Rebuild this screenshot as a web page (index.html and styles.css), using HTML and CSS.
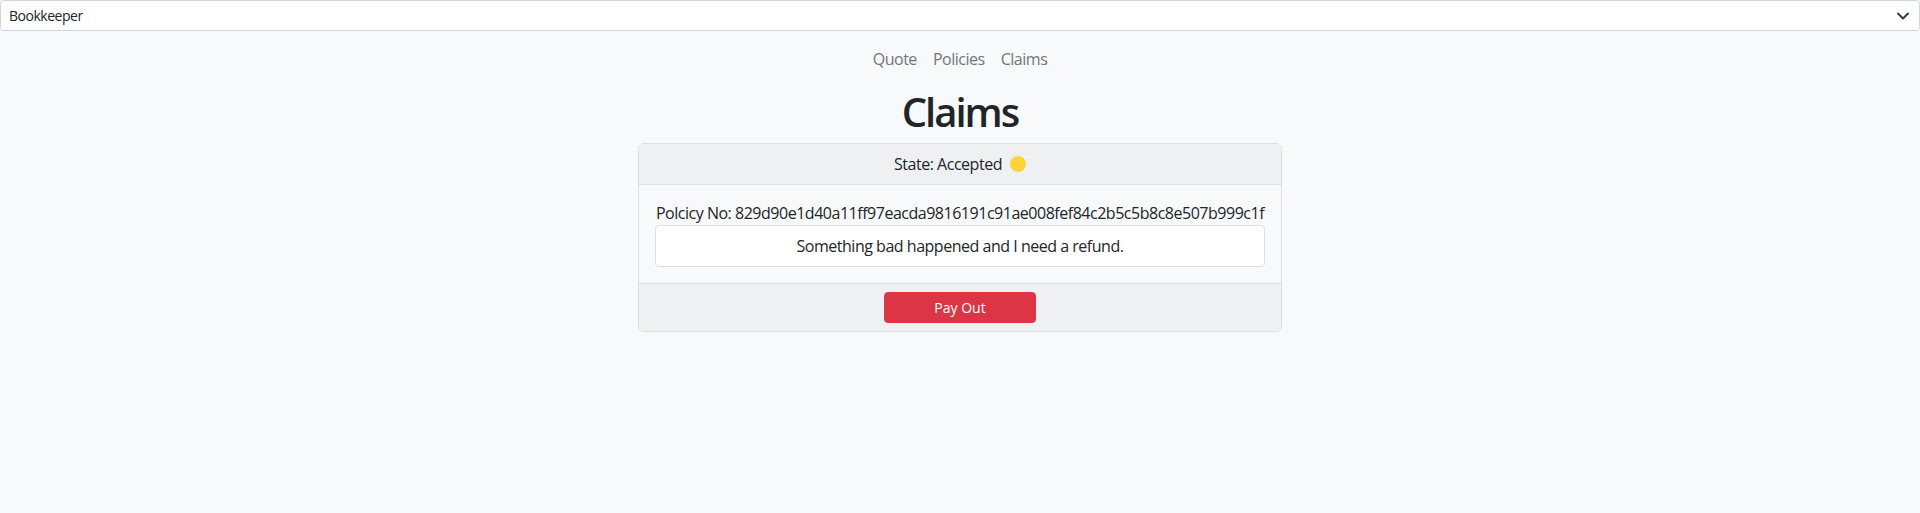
FILE: index.html
```html
<!DOCTYPE html>
<html lang="en">
<head>
<meta charset="utf-8">
<title>Claims</title>
<link rel="stylesheet" href="styles.css">
</head>
<body>
<div class="role-bar">
  <div class="select">
    <span class="select-value">Bookkeeper</span>
    <svg class="select-chevron" width="16" height="12" viewBox="0 0 16 12" aria-hidden="true"><path d="M3 3.5l5 5 5-5" fill="none" stroke="#343a40" stroke-width="2" stroke-linecap="round" stroke-linejoin="round"/></svg>
  </div>
</div>
<nav class="nav">
  <a class="nav-link" href="#">Quote</a>
  <a class="nav-link" href="#">Policies</a>
  <a class="nav-link" href="#">Claims</a>
</nav>
<h1 class="title">Claims</h1>
<div class="card">
  <div class="card-header">State: Accepted <span class="dot"></span></div>
  <div class="card-body">
    <div class="policy">Polcicy No: 829d90e1d40a11ff97eacda9816191c91ae008fef84c2b5c5b8c8e507b999c1f</div>
    <div class="claim-text">Something bad happened and I need a refund.</div>
  </div>
  <div class="card-footer">
    <button class="btn-danger" type="button">Pay Out</button>
  </div>
</div>
</body>
</html>
```
FILE: styles.css
```css
* { box-sizing: border-box; }
html, body { margin: 0; padding: 0; }
body {
  background: #f8f9fa;
  color: #212529;
  font-family: "Segoe UI", "Open Sans", "Noto Sans", sans-serif;
  font-size: 16px;
  line-height: 1.5;
  letter-spacing: -0.03em;
}
.role-bar { display: flex; }
.select {
  flex: 1;
  height: 31px;
  display: flex;
  align-items: center;
  justify-content: space-between;
  padding: 0 8px;
  background: #fff;
  border: 1px solid #d3d7db;
  border-radius: 4px;
  font-size: 14px;
}
.select-value { color: #212529; }
.select-chevron { display: block; }
.nav {
  display: flex;
  justify-content: center;
  padding-top: 8px;
}
.nav-link {
  padding: 8px 8px;
  color: #70767c;
  text-decoration: none;
  font-size: 16px;
  line-height: 24px;
}
.title {
  margin: 9px 0 7px;
  text-align: center;
  font-size: 40px;
  font-weight: 600;
  line-height: 48px;
  letter-spacing: -0.05em;
}
.card {
  width: 644px;
  margin: 0 auto;
  border: 1px solid #dcdfe2;
  border-radius: 6px;
  overflow: hidden;
  text-align: center;
}
.card-header {
  display: flex;
  align-items: center;
  justify-content: center;
  gap: 8px;
  padding: 8px 16px;
  line-height: 24px;
  background: #eff0f2;
  border-bottom: 1px solid #dcdfe2;
}
.dot {
  width: 16px;
  height: 16px;
  border-radius: 50%;
  background: #ffd43b;
}
.card-body {
  padding: 16px;
}
.policy {
  white-space: nowrap;
  line-height: 24px;
}
.claim-text {
  padding: 8px;
  background: #fff;
  border: 1px solid #dcdfe2;
  border-radius: 4px;
  line-height: 24px;
}
.card-footer {
  padding: 8px 16px;
  background: #eff0f2;
  border-top: 1px solid #dcdfe2;
}
.btn-danger {
  display: inline-block;
  width: 25%;
  height: 31px;
  padding: 4px 8px;
  font: inherit;
  font-size: 14px;
  line-height: 21px;
  color: #fff;
  background: #dc3545;
  border: 1px solid #dc3545;
  border-radius: 4px;
}
```
